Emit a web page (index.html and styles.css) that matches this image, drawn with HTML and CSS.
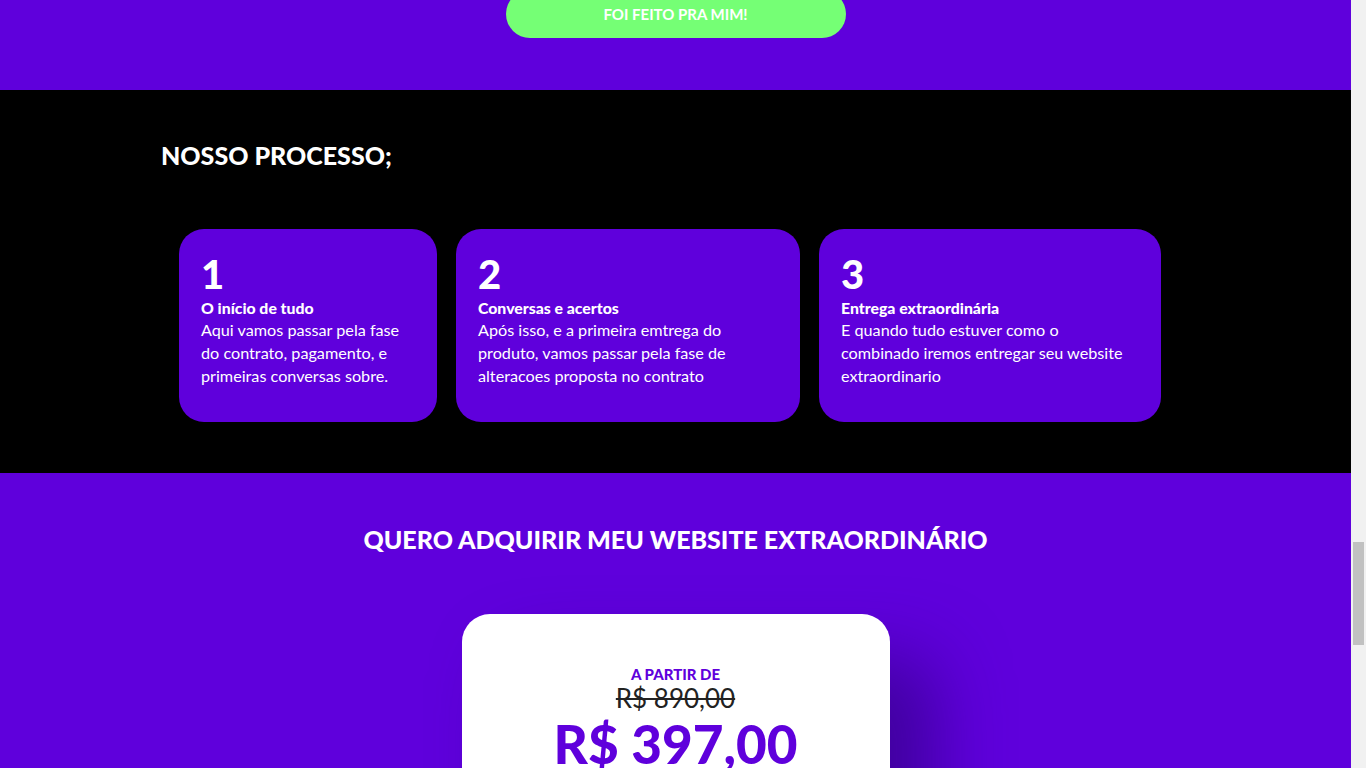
FILE: index.html
```html
<!DOCTYPE html>
<html lang="pt-BR">
<head>
<meta charset="utf-8">
<title>Website Extraordinário</title>
<link rel="stylesheet" href="styles.css">
</head>
<body>
<div class="viewport">
  <main class="page">
    <section class="hero-end">
      <a class="cta" href="#">FOI FEITO PRA MIM!</a>
    </section>

    <section class="process">
      <div class="container">
        <h2 class="process-title">NOSSO PROCESSO;</h2>
        <div class="steps">
          <article class="step">
            <div class="step-num">1</div>
            <h3 class="step-title">O início de tudo</h3>
            <p class="step-text">Aqui vamos passar pela fase do contrato, pagamento, e primeiras conversas sobre.</p>
          </article>
          <article class="step">
            <div class="step-num">2</div>
            <h3 class="step-title">Conversas e acertos</h3>
            <p class="step-text">Após isso, e a primeira emtrega do produto, vamos passar pela fase de alteracoes proposta no contrato</p>
          </article>
          <article class="step">
            <div class="step-num">3</div>
            <h3 class="step-title">Entrega extraordinária</h3>
            <p class="step-text">E quando tudo estuver como o combinado iremos entregar seu website extraordinario</p>
          </article>
        </div>
      </div>
    </section>

    <section class="buy">
      <h2 class="buy-title">QUERO ADQUIRIR MEU WEBSITE EXTRAORDINÁRIO</h2>
      <div class="price-card">
        <div class="price-from">A PARTIR DE</div>
        <div class="price-old">R$ 890,00</div>
        <div class="price-new">R$ 397,00</div>
      </div>
    </section>
  </main>
  <div class="scrollbar"><div class="thumb"></div></div>
</div>
</body>
</html>
```
FILE: styles.css
```css
* { box-sizing: border-box; }
html, body {
  margin: 0;
  padding: 0;
  height: 100%;
  overflow: hidden;
}
body {
  font-family: "Lato", "Liberation Sans", sans-serif;
  background: #5f00dc;
  color: #fff;
}
.viewport {
  display: flex;
  height: 768px;
  overflow: hidden;
}
.page {
  flex: 1;
  min-width: 0;
  overflow: hidden;
}
.scrollbar {
  width: 15px;
  flex: 0 0 15px;
  background: #f1f1f1;
  padding: 542px 2px 0 2px;
}
.thumb {
  height: 103px;
  background: #c1c1c1;
}

.hero-end {
  background: #5f00dc;
  height: 90px;
  display: flex;
  justify-content: center;
  align-items: flex-start;
}
.cta {
  display: flex;
  align-items: center;
  justify-content: center;
  width: 340px;
  height: 48px;
  margin-top: -10px;
  background: #75ff75;
  border-radius: 24px;
  color: #fff;
  font-weight: 700;
  font-size: 15px;
  text-decoration: none;
}

.process {
  background: #000;
  height: 383px;
  padding-top: 50px;
}
.container {
  width: 1029px;
  margin: 0 auto;
}
.process-title {
  margin: 0;
  font-size: 25px;
  line-height: 30px;
  font-weight: 900;
}
.steps {
  display: grid;
  grid-template-columns: 258px 344px 342px;
  gap: 19px;
  margin-top: 59px;
  margin-left: 18px;
}
.step {
  background: #5f00dc;
  border-radius: 25px;
  height: 193px;
  padding: 24px 22px 0 22px;
}
.step-num {
  font-size: 40px;
  font-weight: 900;
  line-height: 42px;
}
.step-title {
  margin: 3px 0 0 0;
  font-size: 15.8px;
  font-weight: 900;
  line-height: 20px;
}
.step-text {
  margin: 0;
  font-size: 16.2px;
  line-height: 23px;
}

.buy {
  background: #5f00dc;
  display: flex;
  flex-direction: column;
  align-items: center;
  padding-top: 51px;
}
.buy-title {
  margin: 0;
  font-size: 25px;
  line-height: 30px;
  font-weight: 900;
}
.price-card {
  margin-top: 60px;
  width: 428px;
  height: 300px;
  background: #fff;
  border-radius: 28px;
  box-shadow: 45px 45px 70px rgba(40, 0, 110, 0.55);
  display: flex;
  flex-direction: column;
  align-items: center;
  padding-top: 49px;
}
.price-from {
  color: #5f00dc;
  font-size: 15px;
  font-weight: 900;
  line-height: 22px;
}
.price-old {
  color: #222;
  font-size: 26px;
  line-height: 26px;
  text-decoration: line-through;
}
.price-new {
  color: #5f00dc;
  font-size: 53px;
  font-weight: 900;
  line-height: 66px;
}
```
